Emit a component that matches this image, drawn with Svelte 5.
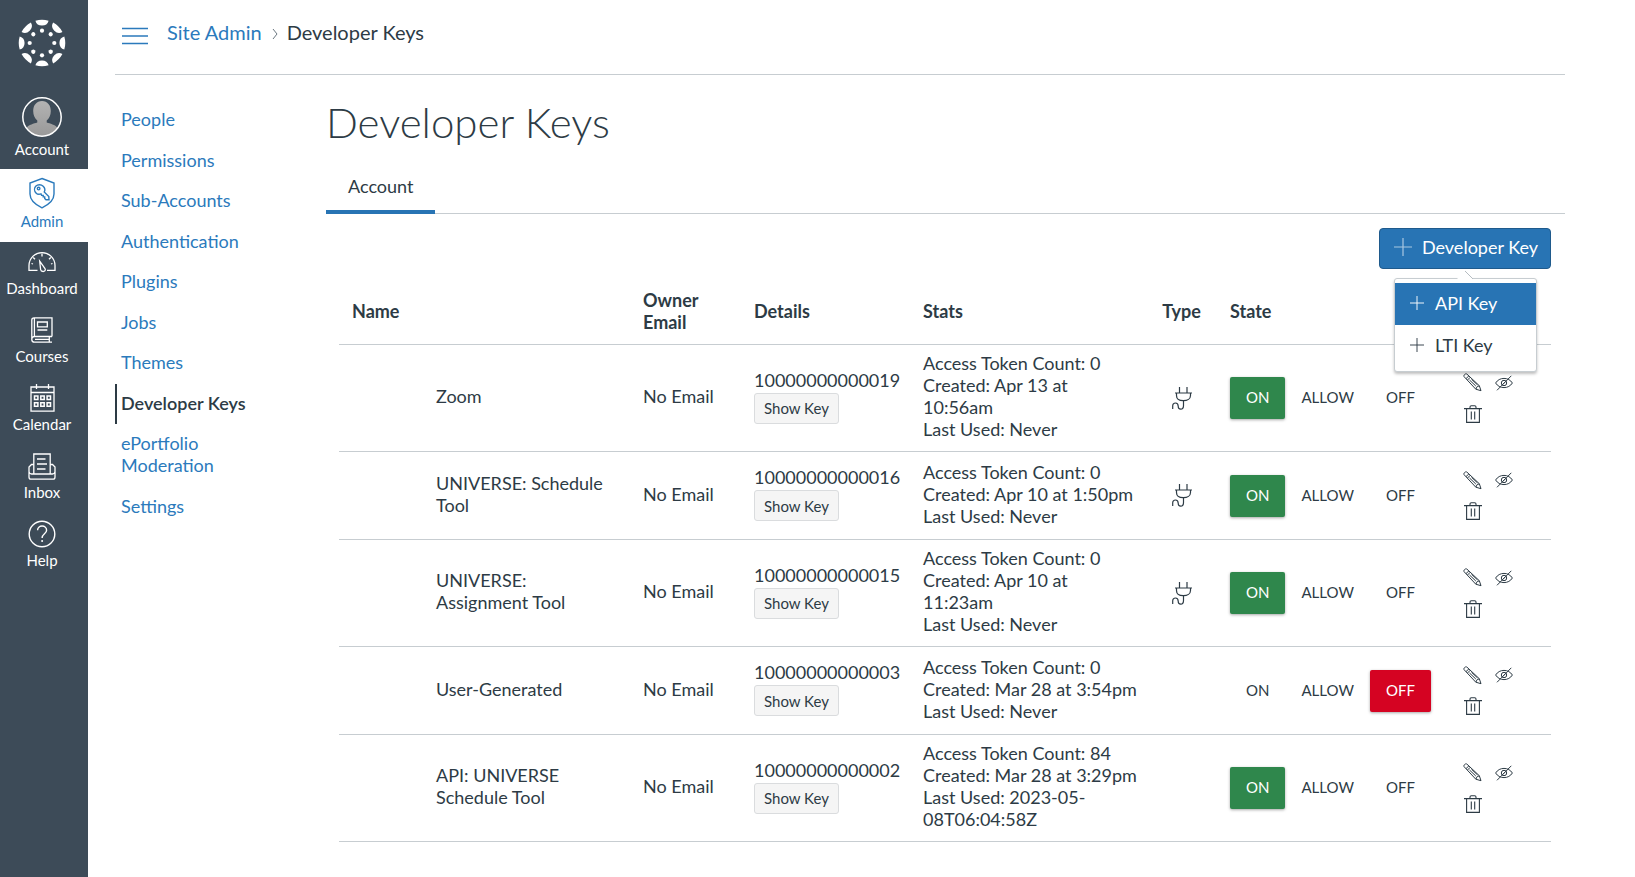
<script lang="ts">
  type State = "ON" | "ALLOW" | "OFF";

  type DeveloperKey = {
    name: string;
    id: string;
    stats: string[];
    lti: boolean;
    state: State;
  };

  const globalNav = ["Dashboard", "Courses", "Calendar", "Inbox", "Help"];

  const sections = [
    "People",
    "Permissions",
    "Sub-Accounts",
    "Authentication",
    "Plugins",
    "Jobs",
    "Themes",
    "Developer Keys",
    "ePortfolio Moderation",
    "Settings",
  ];

  const states: State[] = ["ON", "ALLOW", "OFF"];
  const logoAngles = [0, 45, 90, 135, 180, 225, 270, 315];

  let keys = $state<DeveloperKey[]>([
    {
      name: "Zoom",
      id: "10000000000019",
      stats: ["Access Token Count: 0", "Created: Apr 13 at 10:56am", "Last Used: Never"],
      lti: true,
      state: "ON",
    },
    {
      name: "UNIVERSE: Schedule Tool",
      id: "10000000000016",
      stats: ["Access Token Count: 0", "Created: Apr 10 at 1:50pm", "Last Used: Never"],
      lti: true,
      state: "ON",
    },
    {
      name: "UNIVERSE: Assignment Tool",
      id: "10000000000015",
      stats: ["Access Token Count: 0", "Created: Apr 10 at 11:23am", "Last Used: Never"],
      lti: true,
      state: "ON",
    },
    {
      name: "User-Generated",
      id: "10000000000003",
      stats: ["Access Token Count: 0", "Created: Mar 28 at 3:54pm", "Last Used: Never"],
      lti: false,
      state: "OFF",
    },
    {
      name: "API: UNIVERSE Schedule Tool",
      id: "10000000000002",
      stats: ["Access Token Count: 84", "Created: Mar 28 at 3:29pm", "Last Used: 2023-05-08T06:04:58Z"],
      lti: false,
      state: "ON",
    },
  ]);

  let menuOpen = $state(true);

  function removeKey(id: string) {
    keys = keys.filter((key) => key.id !== id);
  }
</script>

{#snippet plus(size: number)}
  <svg width={size} height={size} viewBox="0 0 18 18" aria-hidden="true">
    <path d="M9 0v18M0 9h18" fill="none" stroke="currentColor" stroke-width="1.2" />
  </svg>
{/snippet}

<div class="app">
  <nav class="global-nav" aria-label="Global navigation">
    <a class="logo" href="#home" aria-label="Home">
      <svg width="48" height="48" viewBox="-24 -24 48 48" fill="#fff">
        {#each logoAngles as angle}
          <g transform="rotate({angle})">
            <path d="M-6.6 -22.3A23.2 23.2 0 0 1 6.6 -22.3A6.8 6.4 0 0 1 -6.6 -22.3Z" />
            <circle cx="0" cy="-12.3" r="2.1" />
          </g>
        {/each}
      </svg>
    </a>
    <a class="nav-item account" href="#account">
      <span class="nav-icon">
        <svg width="40" height="40" viewBox="0 0 40 40">
          <defs>
            <linearGradient id="person" x1="0" y1="0" x2="0" y2="1">
              <stop offset="0" stop-color="#b3b3b3" />
              <stop offset="1" stop-color="#989898" />
            </linearGradient>
            <clipPath id="avatar"><circle cx="20" cy="20" r="19" /></clipPath>
          </defs>
          <g clip-path="url(#avatar)" fill="url(#person)">
            <path d="M20 4c5.500 0 8.800 4.400 8.800 10 0 4-1.600 7.500-4.100 9.600v2c3.300 1.200 8.600 2 10.800 5.400L36 40H4l.5-9c2.200-3.400 7.500-4.200 10.800-5.400v-2c-2.500-2.100-4.100-5.600-4.100-9.600C11.200 8.400 14.500 4 20 4z" />
          </g>
          <circle cx="20" cy="20" r="19.200" fill="none" stroke="#fff" stroke-width="1.500" />
        </svg>
      </span>
      Account
    </a>
    <a class="nav-item admin" href="#admin" aria-current="page">
      <span class="nav-icon">
        <svg width="28" height="32" viewBox="0 0 28 32" fill="none" stroke="currentColor" stroke-width="1.400">
          <path d="M14 1.500 26 6v11c0 6-5 10.500-12 13.800C7 27.500 2 23 2 17V6z" />
          <path d="M15.200 9.200c2 2 2.100 3.900 1 5.800l4.600 4.600.2 3.100-3 .1-1.300-1.400v-1.500h-1.500v-1.500h-1.600l-.6-1.500c-1.800.7-3.700.4-5-1-1.900-1.900-1.900-4.800-.3-6.700 2-1.900 5.500-1.900 7.500 0z" />
          <circle cx="10.600" cy="11.600" r="1.300" />
        </svg>
      </span>
      Admin
    </a>
    {#each globalNav as item}
      <a class="nav-item" href="#{item.toLowerCase()}">
        <span class="nav-icon">
          {#if item === "Dashboard"}
            <svg width="28" height="22" viewBox="0 0 28 22" fill="none" stroke="currentColor" stroke-width="1.300">
              <path d="M9.500 19.300H1V14.600a13 13 0 0 1 26 0v4.700h-8" />
              <path d="M14 2.500v3M22.800 6.500l-1.800 1.800M5.200 6.500 7 8.300M3.500 12.500l1.500.5M24.500 12.500l-1.500.5" />
              <path d="M11.700 10.200 17 17.500c1 1.700-.4 3-1.900 3-1.200 0-2.300-.8-2.500-2z" />
            </svg>
          {:else if item === "Courses"}
            <svg width="22" height="26" viewBox="0 0 22 26" fill="none" stroke="currentColor" stroke-width="1.300">
              <path d="M21 19.500V.8H3C1.600.8.800 1.700.8 3v19.500c0 1.800 1 2.700 2.700 2.700H21M21 19.500H3.500c-1.700 0-2.700 1-2.700 2.500M18.300 19.500v5.700M4 22.400h14.300M3.400 1v18.500" />
              <path d="M6.500 5h9.800v4.800H6.500zM6.500 13h9.800" />
            </svg>
          {:else if item === "Calendar"}
            <svg width="25" height="28" viewBox="0 0 25 28" fill="none" stroke="currentColor" stroke-width="1.300">
              <path d="M1 3h23v24.200H1zM1 8.500h23" />
              <path d="M6.500 0v5M18.500 0v5" />
              <path stroke-width="1.500" d="M4.500 12h3.400v3.400H4.500zM10.800 12h3.400v3.400h-3.400zM17.100 12h3.400v3.400h-3.400zM4.500 18.800h3.400v3.400H4.500zM10.800 18.800h3.400v3.400h-3.400zM17.100 18.800h3.400v3.400h-3.400z" />
            </svg>
          {:else if item === "Inbox"}
            <svg width="28" height="27" viewBox="0 0 28 27" fill="none" stroke="currentColor" stroke-width="1.300">
              <path d="M5.800 11.500H3.500L1 14v10c0 1.500.8 2.200 2 2.200h22c1.200 0 2-.7 2-2.200V14l-2.500-2.500h-2.300M1 18.500c.3 2 1.200 2.500 2.500 2.500h21c1.300 0 2.200-.5 2.500-2.500" />
              <path d="M5.800 21V1h16.400v20M9 6h8.500M9 11h10M9 16h8.500" />
            </svg>
          {:else}
            <svg width="28" height="28" viewBox="0 0 28 28" fill="none" stroke="currentColor" stroke-width="1.400">
              <circle cx="14" cy="14" r="12.800" />
              <path d="M9.600 10.300c0-2.600 2-4.300 4.500-4.300s4.500 1.700 4.500 4.200c0 3.600-4.500 3.600-4.500 7.800" />
              <circle cx="14.100" cy="21" r="1" fill="currentColor" stroke="none" />
            </svg>
          {/if}
        </span>
        {item}
      </a>
    {/each}
  </nav>

  <div class="page">
    <header class="top-bar">
      <button class="hamburger" type="button" aria-label="Toggle section navigation">
        <svg width="26" height="18" viewBox="0 0 26 18">
          <path d="M0 1.500h26M0 9h26M0 16.500h26" stroke="currentColor" stroke-width="1.300" />
        </svg>
      </button>
      <a href="#site-admin">Site Admin</a>
      <svg class="chevron" width="6" height="12" viewBox="0 0 6 12" aria-hidden="true">
        <path d="M1 1l4 5-4 5" fill="none" stroke="#6b7780" stroke-width="1" />
      </svg>
      <span>Developer Keys</span>
    </header>

    <div class="body">
      <nav class="section-nav" aria-label="Site admin">
        {#each sections as section}
          <a href="#{section}" class:active={section === "Developer Keys"}>{section}</a>
        {/each}
      </nav>

      <main>
        <h1>Developer Keys</h1>
        <div class="tabs" role="tablist">
          <button class="tab" type="button" role="tab" aria-selected="true">Account</button>
        </div>

        <div class="panel">
          <div class="toolbar">
            <div class="menu-anchor">
              <button class="primary" type="button" aria-expanded={menuOpen} onclick={() => (menuOpen = !menuOpen)}>
                {@render plus(18)}
                Developer Key
              </button>
              {#if menuOpen}
                <div class="menu" role="menu">
                  <svg class="arrow" width="18" height="10" viewBox="0 0 18 10" aria-hidden="true">
                    <path d="M0 10 9 1l9 9z" fill="#fff" />
                    <path d="M9 1l8 8" fill="none" stroke="#b5bcc1" />
                  </svg>
                  <button class="highlighted" type="button" role="menuitem">{@render plus(14)} API Key</button>
                  <button type="button" role="menuitem">{@render plus(14)} LTI Key</button>
                </div>
              {/if}
            </div>
          </div>

          <table>
            <colgroup>
              <col />
              <col class="col-email" />
              <col class="col-details" />
              <col class="col-stats" />
              <col class="col-type" />
              <col class="col-state" />
              <col class="col-actions" />
            </colgroup>
            <thead>
              <tr>
                <th>Name</th>
                <th>Owner Email</th>
                <th>Details</th>
                <th>Stats</th>
                <th class="type">Type</th>
                <th>State</th>
                <th aria-label="Actions"></th>
              </tr>
            </thead>
            <tbody>
              {#each keys as key (key.id)}
                <tr>
                  <td class="name">{key.name}</td>
                  <td>No Email</td>
                  <td>
                    <div>{key.id}</div>
                    <button class="show-key" type="button">Show Key</button>
                  </td>
                  <td class="stats">
                    {#each key.stats as line}
                      <div>{line}</div>
                    {/each}
                  </td>
                  <td class="type">
                    {#if key.lti}
                      <svg width="20" height="23" viewBox="0 0 20 23" role="img" aria-label="LTI" fill="none" stroke="currentColor" stroke-width="1.200">
                        <path d="M7.500 0v5.800M15 0v5.800M3 6h17M4.500 6v2.500c0 3.200 2.600 5.200 6.800 5.200s7.200-2 7.200-5.200V6" />
                        <path d="M11.500 13.800v4.700c0 2.200-1 3.700-2.800 3.700s-2.500-1.300-2.500-3c0-1.700-.8-3.200-2.700-3.200S.7 17.500.7 19v3" />
                      </svg>
                    {/if}
                  </td>
                  <td class="state-cell">
                    <div class="states">
                      {#each states as state}
                        <button
                          type="button"
                          class:on={state === "ON" && key.state === state}
                          class:off={state === "OFF" && key.state === state}
                          aria-pressed={key.state === state}
                          onclick={() => (key.state = state)}
                        >
                          {state}
                        </button>
                      {/each}
                    </div>
                  </td>
                  <td class="actions-cell">
                    <div class="actions">
                      <button type="button" aria-label="Edit key">
                        <svg width="19" height="19" viewBox="0 0 19 19" fill="none" stroke="currentColor">
                          <path d="M1.200 3.800c-.5-.6-.4-1.300 0-1.800l.9-.8c.6-.5 1.300-.5 1.900 0l12.300 11.500 1.700 5-5.200-1.500zM3 5.600 5.900 2.900M4.500 7 7.300 4.200M13 16.200l.5-2 2.800-1.500" />
                          <path d="M6.500 7l6.300 6M8.500 6.300l6 5.600" />
                        </svg>
                      </button>
                      <button type="button" aria-label="Hide key">
                        <svg width="18" height="18" viewBox="0 0 18 18" fill="none" stroke="currentColor">
                          <path d="M.6 9C2.500 6 5.500 4.400 9 4.400S15.500 6 17.400 9c-1.900 3-4.900 4.600-8.400 4.600S2.500 12 .6 9z" />
                          <circle cx="9" cy="9" r="2.700" />
                          <path d="M2 16.300 16.300 1.800M8 10.200l2.200-2.300" />
                        </svg>
                      </button>
                      <button type="button" aria-label="Delete key" onclick={() => removeKey(key.id)}>
                        <svg width="18" height="18" viewBox="0 0 18 18" fill="none" stroke="currentColor" stroke-width="1.100">
                          <path d="M0 3.600h18M6 3.500V2c0-.8.500-1.300 1.300-1.300h3.400c.8 0 1.300.5 1.300 1.300v1.500M2.600 3.600v13.800h12.800V3.600M7.300 6.500v8M10.700 6.500v8" />
                        </svg>
                      </button>
                    </div>
                  </td>
                </tr>
              {/each}
            </tbody>
          </table>
        </div>
      </main>
    </div>
  </div>
</div>

<style>
  :global(body) {
    background: #fff;
  }

  .app {
    display: flex;
    min-height: 100vh;
    color: #2d3b45;
    font-family: Lato, "Liberation Sans", sans-serif;
    font-size: 18px;
    line-height: 22px;
  }

  a {
    color: #2b7abc;
    text-decoration: none;
  }

  button {
    border: 0;
    padding: 0;
    color: inherit;
    background: none;
    font: inherit;
    cursor: pointer;
  }

  svg {
    display: block;
    flex: none;
  }

  .global-nav {
    display: flex;
    flex: none;
    flex-direction: column;
    width: 88px;
    background: #3d4b58;
  }

  .logo {
    display: flex;
    justify-content: center;
    height: 71px;
    padding: 19px 4px 0 0;
  }

  .nav-item {
    padding: 7px 4px 12px 0;
    color: #fff;
    font-size: 15px;
    line-height: 20px;
    text-align: center;
  }

  .nav-icon {
    display: flex;
    align-items: center;
    justify-content: center;
    height: 26px;
    margin-bottom: 3px;
  }

  .account {
    padding-bottom: 10px;
  }

  .account .nav-icon {
    height: 40px;
    margin-bottom: 2px;
  }

  .admin {
    padding: 8px 4px 11px 0;
    color: #2b7abc;
    background: #fff;
  }

  .admin .nav-icon {
    height: 32px;
    margin-bottom: 2px;
  }

  .page {
    flex: 1;
    min-width: 0;
    padding: 0 70px 34px 27px;
  }

  .top-bar {
    display: flex;
    align-items: center;
    height: 64px;
    padding: 0 0 10px 7px;
    border-bottom: 1px solid #c7cdd1;
    font-size: 20px;
  }

  .hamburger {
    margin: 8px 19px 0 0;
    color: #2b7abc;
  }

  .chevron {
    margin: 4px 9px 0 10px;
  }

  .body {
    display: flex;
  }

  .section-nav {
    display: flex;
    flex: none;
    flex-direction: column;
    width: 150px;
    margin-right: 61px;
    padding-top: 25px;
  }

  .section-nav a {
    padding: 8px 0 10px 4px;
    border-left: 2px solid transparent;
  }

  .section-nav a:nth-child(odd) {
    padding-bottom: 11px;
  }

  .section-nav .active {
    border-color: #2d3b45;
    color: #2d3b45;
    font-weight: 600;
  }

  main {
    flex: 1;
    min-width: 0;
  }

  h1 {
    margin: 22px 0 20px;
    font-size: 42px;
    font-weight: 300;
    line-height: 50px;
  }

  .tabs {
    display: flex;
    border-bottom: 1px solid #c7cdd1;
  }

  .tab {
    margin-bottom: -1px;
    padding: 8px 22px 13px;
    border-bottom: 4px solid #2874b4;
  }

  .panel {
    padding: 14px 14px 0 13px;
  }

  .toolbar {
    display: flex;
    justify-content: flex-end;
    margin-bottom: 11px;
  }

  .menu-anchor {
    position: relative;
  }

  .primary {
    display: flex;
    align-items: center;
    gap: 10px;
    height: 41px;
    padding: 0 12px 3px 14px;
    border: 1px solid #1f5a8c;
    border-radius: 4px;
    color: #fff;
    background: #2874b4;
  }

  .primary svg {
    opacity: 0.6;
  }

  .menu {
    position: absolute;
    top: 50px;
    right: 14px;
    left: 15px;
    z-index: 1;
    padding: 4px 0;
    border: 1px solid #c7cdd1;
    border-radius: 3px;
    background: #fff;
    box-shadow: 0 2px 3px rgba(0, 0, 0, 0.25);
  }

  .menu .arrow {
    position: absolute;
    top: -9px;
    left: 50%;
    margin-left: -9px;
  }

  .menu button {
    display: flex;
    align-items: center;
    gap: 11px;
    width: 100%;
    height: 42px;
    padding: 0 15px 3px;
  }

  .menu .highlighted {
    color: #fff;
    background: #2874b4;
  }

  table {
    width: 100%;
    border-collapse: collapse;
    table-layout: fixed;
  }

  .col-email {
    width: 111px;
  }

  .col-details {
    width: 169px;
  }

  .col-stats {
    width: 236px;
  }

  .col-type {
    width: 71px;
  }

  .col-state {
    width: 233px;
  }

  .col-actions {
    width: 101px;
  }

  th,
  td {
    padding: 7px 13px 11px;
    border-bottom: 1px solid #c7cdd1;
    text-align: left;
    vertical-align: middle;
  }

  th {
    padding: 9px 13px 11px;
    font-weight: 700;
  }

  td {
    height: 69px;
  }

  .name {
    padding-left: 97px;
  }

  .stats {
    padding-right: 5px;
  }

  .type {
    padding-right: 0;
    padding-left: 0;
    text-align: center;
  }

  .type svg {
    margin: 0 auto;
  }

  td.type,
  .state-cell {
    padding-top: 9px;
    padding-bottom: 9px;
  }

  .show-key {
    height: 31px;
    margin-top: 2px;
    padding: 0 9px;
    border: 1px solid #dadcde;
    border-radius: 3px;
    background: #f5f5f5;
    font-size: 15px;
  }

  .states {
    display: flex;
  }

  .states button {
    height: 42px;
    padding: 0 16px 2px;
    border-radius: 2px;
    font-size: 15px;
  }

  .states .on,
  .states .off {
    color: #fff;
    box-shadow: 0 1px 3px rgba(0, 0, 0, 0.35);
  }

  .states .on {
    background: #2f874c;
  }

  .states .off {
    background: #d50322;
  }

  .actions-cell {
    padding: 0 7px;
  }

  .actions {
    display: flex;
    flex-wrap: wrap;
    width: 62px;
  }

  .actions button {
    display: grid;
    place-items: center;
    width: 31px;
    height: 31px;
  }
</style>
